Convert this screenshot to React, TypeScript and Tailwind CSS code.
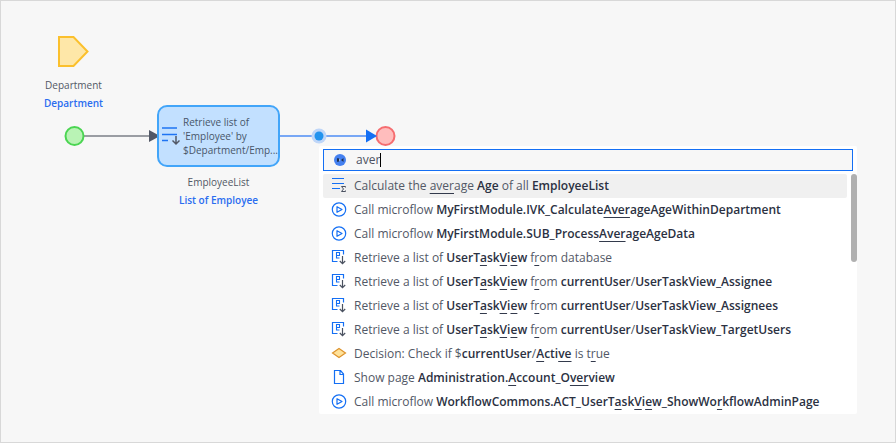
import { ReactNode, useState } from "react";

type IconKind = "aggregate" | "microflow" | "retrieve" | "decision" | "page";

type Suggestion = { icon: IconKind; text: string };

// *...* marks bold text, [...] marks the letters matched by the search.
const suggestions: Suggestion[] = [
  { icon: "aggregate", text: "Calculate the [aver]age *Age* of all *EmployeeList*" },
  { icon: "microflow", text: "Call microflow *MyFirstModule.IVK_Calculate[Aver]ageAgeWithinDepartment*" },
  { icon: "microflow", text: "Call microflow *MyFirstModule.SUB_Process[Aver]ageAgeData*" },
  { icon: "retrieve", text: "Retrieve a list of *UserT[a]sk[V]i[e]w* f[r]om database" },
  { icon: "retrieve", text: "Retrieve a list of *UserT[a]sk[V]i[e]w* f[r]om *currentUser*/*UserTaskView_Assignee*" },
  { icon: "retrieve", text: "Retrieve a list of *UserT[a]sk[V]i[e]w* f[r]om *currentUser*/*UserTaskView_Assignees*" },
  { icon: "retrieve", text: "Retrieve a list of *UserT[a]sk[V]i[e]w* f[r]om *currentUser*/*UserTaskView_TargetUsers*" },
  { icon: "decision", text: "Decision: Check if $*currentUser*/*[A]cti[ve]* is t[r]ue" },
  { icon: "page", text: "Show page *Administration.[A]ccount_O[ver]view*" },
  { icon: "microflow", text: "Call microflow *WorkflowCommons.ACT_UserT[a]sk[V]i[e]w_ShowWo[r]kflowAdminPage*" },
];

function matched(text: string): ReactNode[] {
  return text.split(/\[(.*?)\]/).map((part, i) =>
    i % 2 ? (
      <u key={i} className="underline decoration-[#333a4c] decoration-1 underline-offset-3 [text-decoration-skip-ink:none]">
        {part}
      </u>
    ) : (
      part
    ),
  );
}

function RichText({ text }: { text: string }) {
  return (
    <span className="whitespace-pre">
      {text.split("*").map((part, i) =>
        i % 2 ? (
          <b key={i} className="font-semibold text-[#2b3142]">
            {matched(part)}
          </b>
        ) : (
          <span key={i}>{matched(part)}</span>
        ),
      )}
    </span>
  );
}

function SuggestionIcon({ kind }: { kind: IconKind }) {
  return (
    <svg width="16" height="16" viewBox="0 0 16 16" fill="none" className="shrink-0" aria-hidden="true">
      {kind === "aggregate" && (
        <>
          <path d="M1 0.500h12M1 5.500h12M1 10.500h8" stroke="#146ff4" strokeWidth="1.200" />
          <path d="M14.500 9.500v-1h-4l2 2.500-2 2.500h4v-1" stroke="#4a5160" />
        </>
      )}
      {kind === "microflow" && (
        <>
          <circle cx="8" cy="7.500" r="6.700" stroke="#146ff4" strokeWidth="1.200" />
          <path d="M6 4.700v5.600l5-2.800z" stroke="#146ff4" strokeWidth="1.200" strokeLinejoin="round" />
        </>
      )}
      {kind === "retrieve" && (
        <>
          <path d="M12.500 4.500V0.500h-11v11H6.500" stroke="#146ff4" strokeWidth="1.200" />
          <path d="M5.500 5.500h3v-3h-3v5.500h3" stroke="#146ff4" strokeWidth="1.100" />
          <path d="M11.500 6v7.500M8.800 11l2.700 2.700 2.700-2.700" stroke="#4a5160" strokeWidth="1.200" />
        </>
      )}
      {kind === "decision" && <path d="M1.500 7L8 2.500 14.500 7 8 11.500z" fill="#ffe29a" stroke="#dd932c" strokeWidth="1.200" />}
      {kind === "page" && (
        <path d="M3.500 0.500h6l3 3.500v9.500h-9zM9 0.500V4.500h3.500" stroke="#146ff4" strokeWidth="1.200" />
      )}
    </svg>
  );
}

function SearchPopup() {
  const [query, setQuery] = useState("aver");
  return (
    <section className="absolute top-[145px] right-[38px] left-[318px] rounded-xs bg-white pt-[3px]">
      <label className="mx-1 flex h-[22px] items-center border border-[#146ff4] bg-[#f7f7f7] pl-[10px]">
        <svg width="12" height="12" viewBox="0 0 12 12" className="mr-[10px] shrink-0" aria-hidden="true">
          <circle cx="6" cy="6" r="6" fill="#4480f0" />
          <path d="M3 4.200h1.600L6.200 6 4.600 7.800H3z" fill="#20304f" />
          <path d="M9.500 4v4L7 6z" fill="#20304f" />
          <path d="M5 5l1.500 1L5 7z" fill="#dfe9ff" />
        </svg>
        <input
          type="text"
          aria-label="Search activities"
          value={query}
          onChange={(e) => setQuery(e.target.value)}
          className="field-sizing-content bg-transparent text-xs text-[#4c5262] caret-transparent outline-none"
        />
        <span className="h-[14px] w-px bg-black" />
      </label>
      <div className="flex justify-between pt-[3px]">
        <ul className="ml-1 min-w-0 flex-1">
          {suggestions.map((s, i) => (
            <li key={s.text}>
              <button
                type="button"
                className={`flex h-6 w-full items-center gap-[7px] rounded-xs pl-2 text-left text-xs ${i === 0 ? "bg-[#f0f0f0]" : "bg-white"}`}
              >
                <SuggestionIcon kind={s.icon} />
                <RichText text={s.text} />
              </button>
            </li>
          ))}
        </ul>
        <div className="ml-1 h-[88px] w-[6px] rounded-full bg-[#b0b0b0]" />
      </div>
    </section>
  );
}

function Caption({ name, type }: { name: string; type: string }) {
  return (
    <div className="text-center text-[10px] leading-[18px]">
      <p>{name}</p>
      <p className="font-semibold text-[#2a6df0]">{type}</p>
    </div>
  );
}

function Connections() {
  return (
    <svg width="420" height="200" className="absolute top-0 left-0" fill="none" aria-hidden="true">
      <path d="M83 135h66" stroke="#9a9da3" strokeWidth="2" />
      <path d="M148 129v12l11-6z" fill="#525866" />
      <circle cx="73.500" cy="135" r="9" fill="#b9f3b5" stroke="#4bd552" strokeWidth="2" />
      <path d="M278 135h90" stroke="#78a7f5" strokeWidth="2" />
      <circle cx="318" cy="135" r="7.500" fill="#bfd6f8" />
      <circle cx="318" cy="135" r="4.500" fill="#2293ee" />
      <circle cx="384.500" cy="135" r="9" fill="#ffbdbd" stroke="#f56d70" strokeWidth="2" />
      <path d="M365 128.500v13l11-6.500z" fill="#146ff4" />
    </svg>
  );
}

function ParameterNode() {
  return (
    <div className="absolute top-[35px] left-[43px] flex flex-col items-center gap-2">
      <svg width="32" height="32" viewBox="0 0 32 32" aria-hidden="true">
        <path d="M1 1h14.500l14 14.500-14 14.500H1z" fill="#fee7a8" stroke="#fbc02d" strokeWidth="2" />
      </svg>
      <Caption name="Department" type="Department" />
    </div>
  );
}

function ActivityNode() {
  return (
    <div className="absolute top-[104px] left-[156px] flex flex-col items-center gap-[6px]">
      <div className="flex h-[62px] w-[123px] items-center gap-[3px] rounded-[10px] border-2 border-[#42a5f9] bg-[#c2e0ff] pl-[3px] text-[10px] leading-[14px] text-[#48566a]">
        <svg width="18" height="20" viewBox="0 0 18 20" fill="none" className="shrink-0" aria-hidden="true">
          <path d="M0 2h15M0 8.500h15M0 14.500h6" stroke="#1e74f3" strokeWidth="1.500" />
          <path d="M14 10v8M10.500 14.500l3.500 3.500 3.500-3.500" stroke="#525866" strokeWidth="1.500" />
        </svg>
        <p className="min-w-0 whitespace-nowrap">
          Retrieve list of
          <br />
          'Employee' by
          <br />
          $Department/Emp...
        </p>
      </div>
      <Caption name="EmployeeList" type="List of Employee" />
    </div>
  );
}

export default function App() {
  return (
    <main className="relative min-h-screen overflow-hidden border border-[#d8d8d8] bg-[#f7f7f7] font-['Open_Sans','Noto_Sans',sans-serif] text-[#525866]">
      <ParameterNode />
      <Connections />
      <ActivityNode />
      <SearchPopup />
    </main>
  );
}
